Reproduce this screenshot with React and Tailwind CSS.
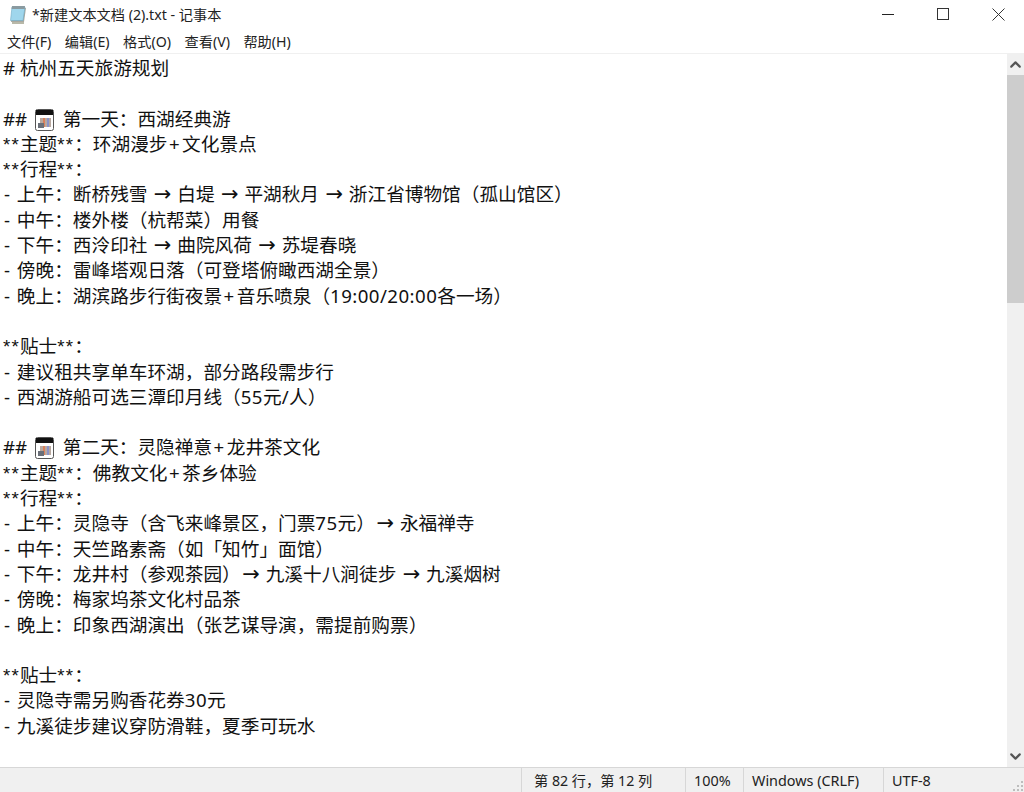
import { ChevronUp, ChevronDown } from 'lucide-react'

const lines = [
  '# 杭州五天旅游规划',
  '',
  '## @ 第一天：西湖经典游',
  '**主题**：环湖漫步+文化景点',
  '**行程**：',
  '- 上午：断桥残雪 → 白堤 → 平湖秋月 → 浙江省博物馆（孤山馆区）',
  '- 中午：楼外楼（杭帮菜）用餐',
  '- 下午：西泠印社 → 曲院风荷 → 苏堤春晓',
  '- 傍晚：雷峰塔观日落（可登塔俯瞰西湖全景）',
  '- 晚上：湖滨路步行街夜景+音乐喷泉（19:00/20:00各一场）',
  '',
  '**贴士**：',
  '- 建议租共享单车环湖，部分路段需步行',
  '- 西湖游船可选三潭印月线（55元/人）',
  '',
  '## @ 第二天：灵隐禅意+龙井茶文化',
  '**主题**：佛教文化+茶乡体验',
  '**行程**：',
  '- 上午：灵隐寺（含飞来峰景区，门票75元）→ 永福禅寺',
  '- 中午：天竺路素斋（如「知竹」面馆）',
  '- 下午：龙井村（参观茶园）→ 九溪十八涧徒步 → 九溪烟树',
  '- 傍晚：梅家坞茶文化村品茶',
  '- 晚上：印象西湖演出（张艺谋导演，需提前购票）',
  '',
  '**贴士**：',
  '- 灵隐寺需另购香花券30元',
  '- 九溪徒步建议穿防滑鞋，夏季可玩水',
]

const menus = ['文件(F)', '编辑(E)', '格式(O)', '查看(V)', '帮助(H)']

function CalendarIcon() {
  return (
    <svg width="19" height="22" viewBox="0 0 19 22" className="inline-block align-[-5px] ml-[3px] mr-[4px]">
      <rect x="0.5" y="0.5" width="18" height="21" rx="2" fill="#fff" stroke="#555" />
      <rect x="1" y="1" width="17" height="5" fill="#111" />
      <rect x="5" y="9" width="11" height="9" fill="#b9a9a0" />
      <rect x="8" y="9" width="2" height="9" fill="#d9805a" />
      <rect x="12" y="9" width="2" height="9" fill="#8a93c8" />
      <rect x="3" y="14" width="6" height="5" fill="#6a6f78" />
    </svg>
  )
}

function NotepadIcon() {
  return (
    <svg width="20" height="20" viewBox="0 0 20 20">
      <path d="M5 3 L18 3 L16 17 L3 17 Z" fill="#a9a9a0" />
      <path d="M4 2 L17 2 L15 15.5 L2.5 15.5 Z" fill="#9fd6ec" stroke="#6ea9c4" strokeWidth="0.6" />
      <path d="M4 1 L17 1 L16.7 4 L3.6 4 Z" fill="#8a9aa0" />
      <path d="M4 18 L16 18" stroke="#8a8a70" strokeWidth="1.2" />
    </svg>
  )
}

// the latin runs need nudging to get the widths of the original font
function Run({ s }) {
  if (s === '@') return <CalendarIcon />
  if (/^\*+$/.test(s)) return <span className="font-['Liberation_Sans'] tracking-[1.2px]">{s}</span>
  if (s === '- ') return <span className="pl-[1px] tracking-[1px]">{s}</span>
  if (s === '→') return <span className="font-['DejaVu_Sans'] text-[21px] leading-none pl-[1.5px] pr-[1px]">{s}</span>
  if (s === '+') return <span className="pl-[1.5px] pr-[2.5px]">{s}</span>
  if (/^[\d:/]+$/.test(s)) return <span className="tracking-[0.45px]">{s}</span>
  return s
}

function TextLine({ text }) {
  const parts = text.split(/(@|\*+|^- |→|\+|[\d:/]+)/).filter(Boolean)
  return (
    <div className="h-[25.3px] leading-[25.3px] whitespace-pre">
      {parts.length ? parts.map((s, i) => <Run key={i} s={s} />) : ' '}
    </div>
  )
}

export default function App() {
  return (
    <div className="w-[1024px] h-[792px] flex flex-col overflow-hidden bg-white text-[#111] font-['Noto_Sans','Noto_Sans_CJK_SC',sans-serif]">
      {/* title bar */}
      <div className="h-[30px] flex items-center shrink-0">
        <div className="ml-[8px] mr-[4px] flex"><NotepadIcon /></div>
        <span className="text-[14.2px] text-[#222]">*新建文本文档 (2).txt - 记事本</span>
        <div className="ml-auto flex items-center gap-[43px] pr-[19px] pb-[2px]">
          <div className="w-[12px] h-[1px] bg-[#222]" />
          <div className="w-[12px] h-[12px] border border-[#333]" />
          <svg width="13" height="13" viewBox="0 0 13 13"><path d="M0.5 0.5 L12.5 12.5 M12.5 0.5 L0.5 12.5" stroke="#333" strokeWidth="1" /></svg>
        </div>
      </div>

      {/* menu bar */}
      <div className="h-[24px] shrink-0 flex items-center gap-[13.5px] pl-[7px] text-[14.2px] text-[#222] border-b border-[#f0f0f0]">
        {menus.map(m => <span key={m}>{m}</span>)}
      </div>

      {/* editor */}
      <div className="flex-1 flex min-h-0">
        <div className="flex-1 pl-[3px] pt-[1px] text-[18.67px] overflow-hidden">
          {lines.map((l, i) => <TextLine key={i} text={l} />)}
        </div>
        <div className="w-[17px] bg-[#f0f0f0] flex flex-col shrink-0">
          <div className="h-[21px] flex items-center justify-center"><ChevronUp size={17} strokeWidth={3} color="#555" /></div>
          <div className="h-[228px] bg-[#cdcdcd]" />
          <div className="flex-1" />
          <div className="h-[21px] flex items-center justify-center"><ChevronDown size={17} strokeWidth={3} color="#555" /></div>
        </div>
      </div>

      {/* status bar */}
      <div className="h-[25px] shrink-0 flex bg-[#f0f0f0] border-t border-[#d7d7d7] text-[14.4px] text-[#222] relative">
        <div className="w-[521px]" />
        <div className="w-[164px] border-l border-[#d7d7d7] pl-[12px] leading-[26px] text-[14.2px]">第 82 行，第 12 列</div>
        <div className="w-[58px] border-l border-[#d7d7d7] pl-[8px] leading-[26px]">100%</div>
        <div className="w-[140px] border-l border-[#d7d7d7] pl-[8px] leading-[26px]">Windows (CRLF)</div>
        <div className="flex-1 border-l border-[#d7d7d7] pl-[8px] leading-[26px]">UTF-8</div>
        <svg width="12" height="12" viewBox="0 0 12 12" className="absolute right-0 bottom-0" fill="#bdbdbd">
          <rect x="9" y="1" width="2" height="2" /><rect x="5" y="5" width="2" height="2" /><rect x="9" y="5" width="2" height="2" />
          <rect x="1" y="9" width="2" height="2" /><rect x="5" y="9" width="2" height="2" /><rect x="9" y="9" width="2" height="2" />
        </svg>
      </div>
    </div>
  )
}
